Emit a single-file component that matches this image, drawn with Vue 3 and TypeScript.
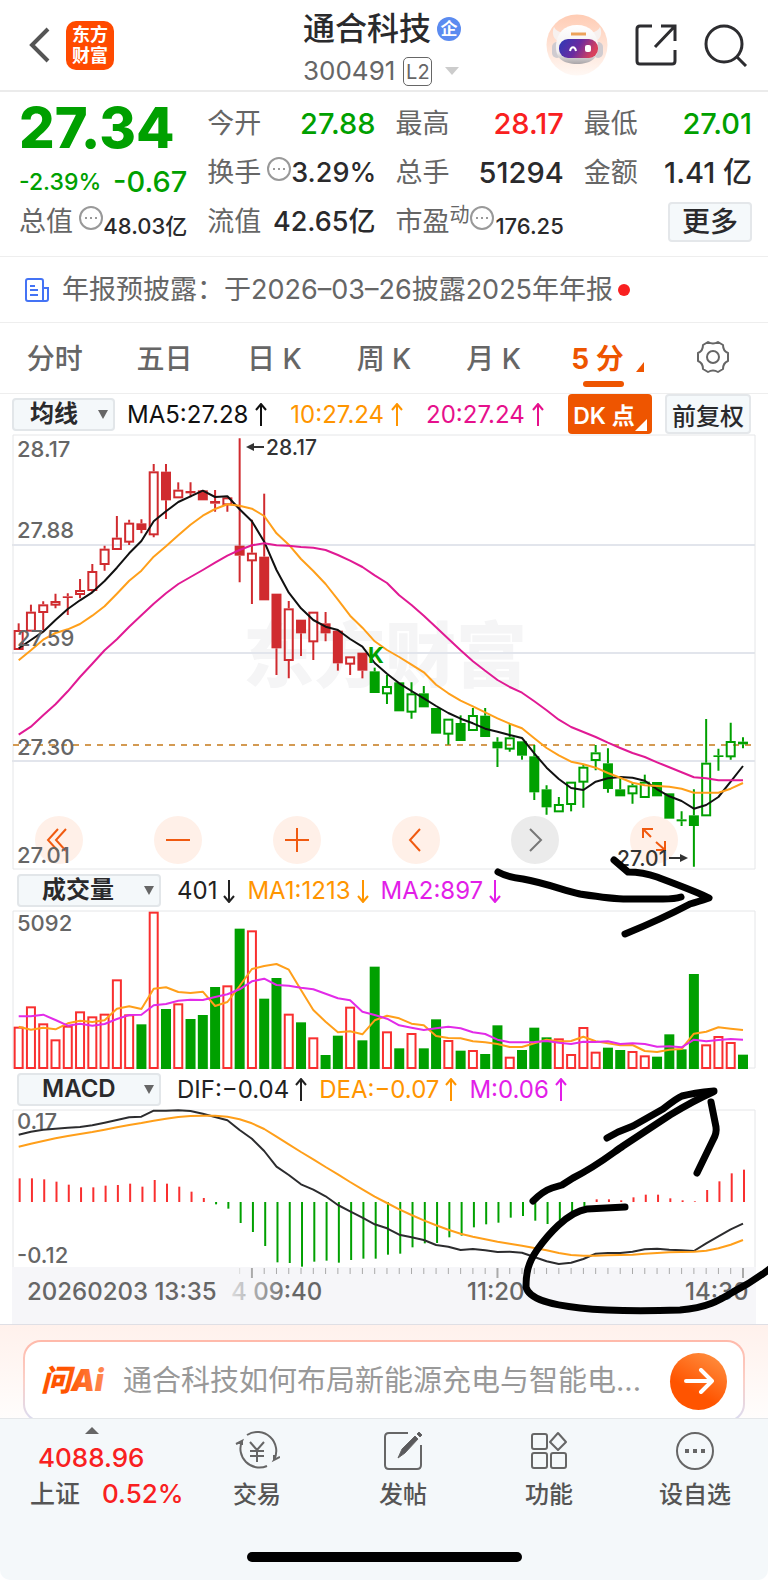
<script setup lang="ts">
import { ref } from 'vue'

type Candle = [high: number, top: number, bottom: number, low: number, hollow: 0 | 1]
interface Readout { text: string; color: string; dir: 'up' | 'down' }

const tabs = ['分时', '五日', '日 K', '周 K', '月 K', '5 分']
const activeTab = ref('5 分')
const overlay = ref('均线')
const volumeKind = ref('成交量')
const indicator = ref('MACD')
const question = ref('')

// Series are stored in thirds of a pixel, top-down.
const COUNT = 60
const u = (v: number) => v / 3
const cx = (i: number) => u(56 + i * 36.83)
const line = (ys: number[]) => ys.map((y, i) => `${cx(i).toFixed(1)},${u(y).toFixed(1)}`).join(' ')

const candles: Candle[] = [
  [580, 600, 657, 657, 1], [524, 545, 602, 602, 1], [514, 523, 546, 600, 1], [491, 513, 524, 535, 1],
  [490, 499, 504, 555, 0], [447, 480, 492, 505, 1], [402, 423, 480, 487, 1], [347, 356, 402, 422, 1],
  [258, 323, 357, 357, 1], [269, 278, 335, 345, 1], [268, 280, 300, 310, 0], [102, 124, 313, 322, 1],
  [102, 125, 211, 267, 0], [157, 179, 202, 202, 1], [157, 183, 190, 202, 0], [181, 181, 211, 211, 0],
  [180, 213, 221, 245, 0], [200, 202, 223, 245, 1], [25, 347, 377, 457, 0], [269, 368, 391, 522, 1],
  [191, 380, 511, 511, 0], [491, 491, 655, 735, 0], [513, 535, 690, 745, 1], [569, 569, 610, 678, 0],
  [545, 545, 634, 690, 1], [546, 580, 610, 634, 0], [602, 602, 700, 722, 0], [679, 679, 701, 735, 1],
  [668, 668, 722, 745, 0], [713, 724, 789, 789, 0], [735, 768, 790, 822, 1], [757, 757, 844, 844, 0],
  [757, 790, 845, 866, 1], [768, 790, 832, 832, 0], [834, 834, 911, 911, 0], [866, 866, 911, 944, 1],
  [856, 879, 933, 933, 0], [834, 855, 900, 900, 1], [834, 857, 921, 921, 0], [922, 935, 955, 1011, 0],
  [880, 922, 956, 965, 1], [934, 934, 977, 989, 0], [945, 979, 1087, 1110, 0], [1066, 1078, 1132, 1154, 0],
  [1101, 1122, 1144, 1144, 1], [1055, 1055, 1122, 1144, 1], [1003, 1010, 1055, 1133, 1], [945, 967, 990, 1021, 1],
  [955, 1000, 1077, 1088, 0], [1045, 1078, 1099, 1099, 0], [1056, 1066, 1090, 1121, 1], [1034, 1055, 1101, 1101, 1],
  [1056, 1056, 1099, 1099, 0], [1090, 1090, 1166, 1166, 0], [1144, 1168, 1174, 1188, 0], [1078, 1156, 1188, 1310, 0],
  [867, 998, 1156, 1156, 1], [956, 976, 981, 1022, 0], [878, 933, 979, 989, 1], [922, 935, 943, 955, 0],
]
const candleColor = (i: number) => (i < 29 ? '#d02b2f' : '#00a000')

const ma5 = [655, 630, 605, 570, 537, 511, 487, 453, 413, 370, 333, 274, 244, 216, 199, 182, 201, 199, 238, 274, 335, 420, 488, 535, 570, 590, 600, 627, 650, 699, 731, 760, 783, 805, 828, 849, 866, 880, 896, 905, 915, 924, 970, 1013, 1047, 1074, 1080, 1055, 1045, 1041, 1043, 1052, 1078, 1099, 1113, 1136, 1125, 1101, 1055, 1008]
const ma10 = [691, 661, 629, 609, 598, 582, 557, 529, 491, 452, 422, 380, 349, 316, 284, 257, 237, 223, 227, 236, 258, 310, 344, 387, 423, 462, 509, 557, 593, 634, 660, 681, 704, 727, 764, 790, 812, 829, 847, 865, 881, 895, 925, 954, 976, 995, 1003, 1013, 1029, 1043, 1058, 1066, 1068, 1070, 1076, 1088, 1088, 1088, 1076, 1059]
const ma20 = [914, 890, 856, 823, 784, 741, 701, 661, 628, 590, 556, 521, 490, 462, 441, 420, 398, 377, 360, 346, 340, 346, 347, 351, 353, 360, 375, 392, 411, 436, 459, 496, 525, 557, 592, 626, 661, 694, 722, 750, 771, 788, 814, 841, 869, 891, 906, 921, 938, 954, 969, 981, 997, 1012, 1027, 1042, 1045, 1051, 1051, 1051]

const VOL_BASE = 627
const volumes = [500, 439, 490, 538, 497, 454, 469, 461, 358, 463, 493, 155, 447, 430, 477, 465, 381, 376, 206, 211, 416, 354, 461, 487, 532, 585, 527, 440, 541, 320, 514, 565, 519, 565, 478, 540, 572, 570, 582, 496, 590, 570, 503, 532, 535, 582, 501, 575, 563, 570, 573, 586, 590, 523, 568, 342, 553, 528, 546, 584]
const rising = new Set([0, 1, 2, 3, 4, 5, 6, 7, 8, 9, 11, 13, 17, 19, 22, 24, 27, 30, 32, 35, 37, 40, 44, 45, 46, 47, 50, 51, 56, 57, 58])
const vma1 = [500, 509, 503, 508, 490, 482, 486, 481, 446, 439, 447, 386, 382, 396, 399, 395, 438, 426, 378, 327, 318, 312, 329, 390, 450, 485, 517, 514, 523, 481, 467, 475, 491, 496, 528, 534, 535, 544, 547, 552, 561, 561, 550, 539, 544, 543, 530, 544, 550, 556, 555, 573, 576, 569, 567, 521, 515, 502, 506, 510]
const vma2 = [469, 469, 464, 480, 497, 491, 497, 492, 477, 465, 464, 436, 432, 422, 419, 420, 411, 403, 388, 364, 356, 375, 377, 383, 388, 401, 415, 421, 455, 465, 476, 496, 503, 510, 505, 500, 505, 517, 522, 539, 547, 547, 546, 543, 548, 552, 545, 546, 544, 552, 550, 552, 560, 559, 562, 539, 544, 540, 537, 539]

const ZERO = 396
const hist = [325, 325, 328, 335, 344, 352, 352, 347, 345, 341, 350, 330, 341, 350, 365, 384, 403, 416, 459, 486, 528, 577, 579, 590, 575, 572, 578, 570, 566, 566, 554, 551, 532, 520, 519, 502, 497, 472, 463, 458, 443, 438, 452, 462, 450, 425, 410, 388, 388, 391, 382, 374, 374, 385, 391, 394, 360, 334, 310, 299]
const dif = [194, 185, 179, 176, 173, 171, 166, 158, 150, 142, 140, 122, 122, 121, 123, 131, 141, 151, 180, 206, 243, 290, 315, 343, 359, 379, 405, 424, 443, 463, 475, 494, 502, 510, 525, 530, 540, 537, 541, 546, 545, 548, 561, 574, 582, 578, 567, 551, 549, 549, 545, 538, 536, 539, 541, 543, 520, 499, 478, 461]
const dea = [230, 221, 213, 205, 198, 192, 186, 179, 172, 165, 159, 152, 146, 141, 138, 137, 137, 140, 148, 160, 177, 200, 223, 246, 268, 291, 313, 336, 358, 380, 399, 418, 435, 451, 466, 479, 491, 500, 508, 515, 521, 527, 534, 541, 549, 555, 557, 557, 556, 555, 554, 551, 549, 547, 546, 545, 542, 535, 524, 510]
const ticks = Array.from({ length: COUNT - 18 }, (_, k) => k + 18)

const priceLabels = [{ t: '28.17', y: 27 }, { t: '27.88', y: 108 }, { t: '27.59', y: 216 }, { t: '27.30', y: 325 }, { t: '27.01', y: 433 }]

const maReadouts: Readout[] = [
  { text: 'MA5:27.28', color: '#111', dir: 'up' },
  { text: '10:27.24', color: '#ff9500', dir: 'up' },
  { text: '20:27.24', color: '#e6108c', dir: 'up' },
]
const volReadouts: Readout[] = [
  { text: '401', color: '#222', dir: 'down' },
  { text: 'MA1:1213', color: '#ff9500', dir: 'down' },
  { text: 'MA2:897', color: '#e21ee8', dir: 'down' },
]
const macdReadouts: Readout[] = [
  { text: 'DIF:−0.04', color: '#222', dir: 'up' },
  { text: 'DEA:−0.07', color: '#ff9500', dir: 'up' },
  { text: 'M:0.06', color: '#e21ee8', dir: 'up' },
]
const arrow = { up: 'M6 23V1M1 7l5-6 5 6', down: 'M6 1v22M1 17l5 6 5-6' }

const controls = [
  { label: '最早', d: 'M23 13l-10 11 10 11M31 13l-10 11 10 11', muted: false },
  { label: '缩小', d: 'M12 24h24', muted: false },
  { label: '放大', d: 'M12 24h24M24 12v24', muted: false },
  { label: '向左', d: 'M28 13L18 24l10 11', muted: false },
  { label: '向右', d: 'M19 13l11 11-11 11', muted: true },
  { label: '全屏', d: 'M13 22V13h10M13 13l8 8M35 25v9h-9M35 34l-9-8', muted: false },
]
</script>

<template>
  <div class="page">
    <header class="top">
      <div class="top-left">
        <button class="plain" aria-label="返回">
          <svg width="22" height="36" viewBox="0 0 22 36"><path d="M20 2L4 18l16 16" fill="none" stroke="#555" stroke-width="4" /></svg>
        </button>
        <a class="brand" href="#"><span>东方</span><span>财富</span></a>
      </div>
      <div class="name">
        <h1>通合科技<i class="badge">企</i></h1>
        <p>300491<span class="level">L2</span><i class="caret"></i></p>
      </div>
      <div class="top-right">
        <button class="plain" aria-label="智能助手">
          <svg width="62" height="62" viewBox="0 0 62 62">
            <defs>
              <linearGradient id="halo" x1="0" y1="0" x2="0" y2="1"><stop offset="0" stop-color="#ffccb4" /><stop offset="1" stop-color="#fff8f4" /></linearGradient>
              <linearGradient id="visor" x1="0" y1="0" x2="1" y2="0.3"><stop offset="0" stop-color="#2b3ab8" /><stop offset="0.55" stop-color="#6a2ba0" /><stop offset="1" stop-color="#d8405c" /></linearGradient>
              <linearGradient id="shell" x1="0" y1="0" x2="0" y2="1"><stop offset="0" stop-color="#fff" /><stop offset="0.7" stop-color="#f1eeee" /><stop offset="1" stop-color="#aaa5a8" /></linearGradient>
            </defs>
            <circle cx="31" cy="31" r="30.500" fill="url(#halo)" />
            <path d="M8 13c-3 7 0 13 6 15l5-10c-5 1-9-1-11-5zM54 13c3 7 0 13-6 15l-5-10c5 1 9-1 11-5z" fill="#f7f1ef" />
            <rect x="6" y="28" width="10" height="16" rx="5" fill="#cfcbd0" />
            <rect x="47" y="28" width="10" height="16" rx="5" fill="#cfcbd0" />
            <path d="M31 11c13 0 20 8 21 20 1 13-7 19-21 19S9 44 10 31c1-12 8-20 21-20z" fill="url(#shell)" />
            <rect x="13" y="25" width="39" height="19" rx="9" fill="url(#visor)" />
            <path d="M24 37c1-5 5-5 6 0" fill="none" stroke="#fff" stroke-width="2" />
            <rect x="39" y="31" width="6" height="7" rx="2" fill="#fff" />
            <path d="M25 20h15" stroke="#eda35c" stroke-width="3" />
          </svg>
        </button>
        <button class="plain" aria-label="分享">
          <svg width="42" height="42" viewBox="0 0 42 42" fill="none" stroke="#2d2d30" stroke-width="3">
            <path d="M17 2H5Q2 2 2 5v32q0 3 3 3h32q3 0 3-3V26M26 2h14v15M40 2L20 23" />
          </svg>
        </button>
        <button class="plain" aria-label="搜索">
          <svg width="44" height="44" viewBox="0 0 44 44" fill="none" stroke="#2d2d30" stroke-width="3">
            <circle cx="20" cy="21" r="18" /><path d="M33 34l9 9" />
          </svg>
        </button>
      </div>
    </header>

    <section class="quote">
      <strong class="price">27.34</strong>
      <div class="cell"><span>今开</span><b class="green">27.88</b></div>
      <div class="cell"><span>最高</span><b class="red">28.17</b></div>
      <div class="cell"><span>最低</span><b class="green">27.01</b></div>

      <div class="cell change green"><b class="pct">-2.39%</b><b>-0.67</b></div>
      <div class="cell"><span>换手<svg class="info" viewBox="0 0 24 24"><circle cx="12" cy="12" r="11" /><path d="M6 12h2M11 12h2M16 12h2" /></svg></span><b class="medium">3.29%</b></div>
      <div class="cell"><span>总手</span><b>51294</b></div>
      <div class="cell"><span>金额</span><b>1.41 亿</b></div>

      <div class="cell"><span>总值<svg class="info" viewBox="0 0 24 24"><circle cx="12" cy="12" r="11" /><path d="M6 12h2M11 12h2M16 12h2" /></svg></span><b class="small">48.03亿</b></div>
      <div class="cell"><span>流值</span><b class="medium">42.65亿</b></div>
      <div class="cell"><span>市盈<sup>动</sup><svg class="info" viewBox="0 0 24 24"><circle cx="12" cy="12" r="11" /><path d="M6 12h2M11 12h2M16 12h2" /></svg></span><b class="small">176.25</b></div>
      <div class="cell more-cell"><button class="more">更多</button></div>
    </section>

    <a class="news" href="#">
      <svg width="24" height="24" viewBox="0 0 24 24" fill="none" stroke="#4473f5" stroke-width="2">
        <path d="M18 23H3q-2 0-2-2V3q0-2 2-2h13q2 0 2 2v20h3q2 0 2-2V10h-5M5 8h5M5 12h8M5 17h8" />
      </svg>
      <span>年报预披露：于2026–03–26披露2025年年报</span>
      <i class="dot"></i>
    </a>

    <nav class="tabs">
      <button v-for="t in tabs" :key="t" :class="{ on: t === activeTab }" @click="activeTab = t">
        {{ t }}<svg v-if="t === activeTab" class="corner" width="8" height="10" viewBox="0 0 8 10"><path d="M8 0v10H0z" fill="#ee5500" /></svg>
      </button>
      <button aria-label="设置">
        <svg width="34" height="34" viewBox="0 0 34 34" fill="none" stroke="#666" stroke-width="2">
          <path d="M12 2q5 3 10 0l5 3q0 6 5 8v8q-5 2-5 8l-5 3q-5-3-10 0l-5-3q0-6-5-8v-8q5-2 5-8z" stroke-linejoin="round" /><circle cx="17" cy="17" r="6" />
        </svg>
      </button>
    </nav>

    <div class="toolbar ma-bar">
      <label class="picker narrow"><select v-model="overlay" aria-label="主图指标"><option>均线</option></select></label>
      <div class="readouts">
        <span v-for="r in maReadouts" :key="r.text" :style="{ color: r.color }">{{ r.text }}<svg width="12" height="24" viewBox="0 0 12 24"><path :d="arrow[r.dir]" /></svg></span>
      </div>
      <button class="dk">DK 点<svg width="12" height="12" viewBox="0 0 12 12"><path d="M12 0v12H0z" fill="#fff" /></svg></button>
      <button class="adjust">前复权</button>
    </div>

    <section class="charts">
      <div class="price-wrap">
        <svg class="chart price-chart" viewBox="0 4 768 436">
          <text class="watermark" x="243" y="251">东方财富</text>
          <path d="M12 115H755M12 223H755M12 331H755" stroke="#e2e5ec" stroke-width="2" />
          <path d="M13 5H755V439H13z" fill="none" stroke="#e5e6e8" stroke-width="1" />
          <path d="M13 315H755" stroke="#d39a52" stroke-width="2" stroke-dasharray="6 6" />
          <g v-for="(c, i) in candles" :key="i" :stroke="candleColor(i)" stroke-width="2">
            <path :d="`M${cx(i)} ${u(c[0])}V${u(c[1])}M${cx(i)} ${u(c[2])}V${u(c[3])}`" />
            <rect v-if="c[4]" :x="cx(i) - 4" :y="u(c[1]) + 1" width="8" :height="Math.max(u(c[2] - c[1]) - 1, 1)" fill="none" />
            <rect v-else :x="cx(i) - 5" :y="u(c[1])" width="10" :height="u(c[2] - c[1])" :fill="candleColor(i)" stroke="none" />
          </g>
          <polyline :points="line(ma5)" stroke="#111" class="curve" />
          <polyline :points="line(ma10)" stroke="#ff9f1a" class="curve" />
          <polyline :points="line(ma20)" stroke="#e01a94" class="curve" />
          <text class="mark-k" x="368" y="233">K</text>
          <text v-for="l in priceLabels" :key="l.t" class="axis" x="17" :y="l.y">{{ l.t }}</text>
          <path d="M250 17h14M669 428h14" stroke="#333" stroke-width="2" />
          <path d="M246 17l8-4v8zM688 428l-8-4v8z" fill="#333" />
          <text class="extreme" x="266" y="25">28.17</text>
          <text class="extreme" x="617" y="436">27.01</text>
        </svg>
        <div class="controls">
          <button v-for="c in controls" :key="c.label" :aria-label="c.label" :class="{ muted: c.muted }">
            <svg viewBox="0 0 48 48"><path :d="c.d" /></svg>
          </button>
        </div>
      </div>

      <div class="toolbar">
        <label class="picker"><select v-model="volumeKind" aria-label="成交量指标"><option>成交量</option></select></label>
        <div class="readouts tight">
          <span v-for="r in volReadouts" :key="r.text" :style="{ color: r.color }">{{ r.text }}<svg width="12" height="24" viewBox="0 0 12 24"><path :d="arrow[r.dir]" /></svg></span>
        </div>
      </div>
      <svg class="chart" viewBox="0 50 768 159">
        <path d="M13 51H755V208H13z" fill="none" stroke="#e5e6e8" stroke-width="1" />
        <template v-for="(v, i) in volumes" :key="i">
          <rect v-if="rising.has(i)" :x="cx(i) - 4" :y="u(v) + 1" width="8" :height="u(VOL_BASE - v) - 2" fill="none" stroke="#f92f2f" stroke-width="2" />
          <rect v-else :x="cx(i) - 5" :y="u(v)" width="10" :height="u(VOL_BASE - v)" fill="#00a000" />
        </template>
        <polyline :points="line(vma1)" stroke="#ff9f1a" class="curve" />
        <polyline :points="line(vma2)" stroke="#e22be8" class="curve" />
        <text class="axis" x="17" y="71">5092</text>
      </svg>

      <div class="toolbar">
        <label class="picker"><select v-model="indicator" aria-label="副图指标"><option>MACD</option></select></label>
        <div class="readouts tight">
          <span v-for="r in macdReadouts" :key="r.text" :style="{ color: r.color }">{{ r.text }}<svg width="12" height="24" viewBox="0 0 12 24"><path :d="arrow[r.dir]" /></svg></span>
        </div>
      </div>
      <svg class="chart" viewBox="0 39 768 215">
        <defs>
          <linearGradient id="fade" gradientUnits="userSpaceOnUse" x1="225" y1="0" x2="290" y2="0"><stop offset="0" stop-color="#e8e8ea" /><stop offset="1" stop-color="#666" /></linearGradient>
        </defs>
        <path d="M13 197V40H755V197" fill="none" stroke="#e5e6e8" stroke-width="1" />
        <rect x="12" y="197" width="744" height="57" fill="#f6f6f9" />
        <path v-for="(h, i) in hist" :key="i" :d="`M${cx(i) + 1} ${u(ZERO)}V${u(h)}`" :stroke="h < ZERO ? '#f92f2f' : '#00a000'" stroke-width="2" />
        <text class="axis" x="17" y="59">0.17</text>
        <text class="axis" x="17" y="193">-0.12</text>
        <polyline :points="line(dif)" stroke="#2c2c2e" class="curve" />
        <polyline :points="line(dea)" stroke="#ff9f1a" class="curve" />
        <path v-for="i in ticks" :key="i" :d="`M${cx(i)} 198v${i % 20 === 19 ? 10 : 6}`" :stroke="i === 18 ? '#ddd' : '#aaa'" :stroke-width="i % 20 === 19 ? 2 : 1" />
        <text class="time" x="27" y="230">20260203 13:35</text>
        <text class="time" x="231" y="230" fill="url(#fade)">4 09:40</text>
        <text class="time" x="467" y="230">11:20</text>
        <text class="time" x="685" y="230">14:30</text>
      </svg>

      <svg class="ink" viewBox="0 434 768 890" fill="none" stroke="#000" stroke-width="7" stroke-linecap="round" stroke-linejoin="round">
        <path d="M498 872Q507 877 523 879C545 883 563 890 580 894C600 897 613 899 627 899H663Q675 899 681 897" />
        <path d="M614 860L628 872Q643 872 657 877C673 883 700 893 709 898Q697 902 690 904C673 913 647 925 625 934" />
        <path d="M533 1201Q543 1191 552 1188L562 1185L573 1178C597 1166 610 1155 623 1146L670 1115Q693 1101 713 1092" />
        <path d="M607 1138L618 1132L633 1126L663 1109Q677 1098 682 1096Q693 1093 714 1091" />
        <path d="M711 1102L716 1127Q717 1133 713 1140L697 1173" />
        <path d="M625 1207L587 1209C567 1212 547 1236 537 1250C528 1263 526 1273 526 1287C529 1300 553 1305 580 1308C607 1311 647 1311 680 1310C707 1308 720 1300 733 1292Q753 1282 772 1267" />
      </svg>
    </section>

    <section class="ask">
      <div class="ask-card">
        <svg width="70" height="36" viewBox="0 0 70 36" role="img" aria-label="问Ai">
          <defs><linearGradient id="askfill" x1="0" y1="0" x2="1" y2="0"><stop offset="0.4" stop-color="#ff5400" /><stop offset="1" stop-color="#ff8a55" /></linearGradient></defs>
          <text class="ask-logo" x="0" y="28" fill="url(#askfill)">问Ai</text>
        </svg>
        <input v-model="question" aria-label="提问" placeholder="通合科技如何布局新能源充电与智能电..." />
        <button class="send" aria-label="发送">
          <svg width="30" height="26" viewBox="0 0 30 26" fill="none" stroke="#fff" stroke-width="4" stroke-linecap="round" stroke-linejoin="round"><path d="M2 13h26M17 2l11 11-11 11" /></svg>
        </button>
      </div>
    </section>

    <footer class="bottom">
      <nav>
        <a class="index" href="#">
          <i class="tri"></i>
          <b>4088.96</b>
          <span>上证<b>0.52%</b></span>
        </a>
        <a href="#">
          <svg width="46" height="42" viewBox="0 0 46 42"><path d="M13 5A19 19 0 0 1 40 30l6-3M33 36A19 19 0 0 1 8 11L2 14M40 30v-5M8 11v4M16 12l7 8 7-8M23 20v12M16 21h14M16 26h14" /></svg>
          <span>交易</span>
        </a>
        <a href="#">
          <svg width="42" height="42" viewBox="0 0 42 42"><path d="M26 3H7Q3 3 3 7v28q0 4 4 4h28q4 0 4-4V15" /><path d="M16 28l4-9L33 6l3 3-13 14zM35 4l2-2 3 3-2 2z" fill="#5a5a5c" stroke-width="1" /></svg>
          <span>发帖</span>
        </a>
        <a href="#">
          <svg width="42" height="42" viewBox="0 0 42 42"><rect x="4" y="4" width="15" height="15" rx="2" /><rect x="4" y="23" width="15" height="15" rx="2" /><rect x="23" y="23" width="15" height="15" rx="2" /><path d="M30 3l8 9-8 8-8-8z" stroke-linejoin="round" /></svg>
          <span>功能</span>
        </a>
        <a href="#">
          <svg width="42" height="42" viewBox="0 0 42 42"><circle cx="21" cy="21" r="18" /><path d="M11 21h4M19 21h4M27 21h4" stroke-width="4" /></svg>
          <span>设自选</span>
        </a>
      </nav>
      <div class="home"></div>
    </footer>
  </div>
</template>

<style>
body { margin: 0; background: #fff; }
</style>

<style scoped>
* { box-sizing: border-box; }
.page { font-family: Inter, "Noto Sans CJK SC", sans-serif; color: #2a2a2c; background: #fff; overflow: hidden; }
button, select, input { font: inherit; color: inherit; }
button { cursor: pointer; padding: 0; }
a { color: inherit; text-decoration: none; }
i { font-style: normal; }
svg { display: block; flex: none; }
.plain { border: 0; background: none; }
.green { color: #00a000; }
.red { color: #f92020; }

.top { display: grid; grid-template-columns: 1fr auto 1fr; height: 92px; border-bottom: 2px solid #ebebeb; padding: 0 20px 0 28px; }
.top-left { display: flex; align-items: center; gap: 16px; }
.brand { width: 48px; height: 49px; border-radius: 10px; background: #ff4a00; color: #fff; display: flex; flex-direction: column; align-items: center; justify-content: center; font-size: 18px; line-height: 21px; font-weight: 700; }
.name { padding-top: 9px; margin-right: 12px; }
.name h1 { margin: 0; font-size: 32px; line-height: 40px; font-weight: 500; display: flex; align-items: center; }
.badge { width: 24px; height: 24px; margin-left: 6px; border-radius: 50%; background: #5b8bf0; color: #fff; font-size: 17px; line-height: 24px; text-align: center; font-weight: 700; }
.name p { margin: 4px 0 0; font-size: 26px; line-height: 36px; color: #666; display: flex; align-items: center; }
.level { margin-left: 8px; width: 29px; height: 29px; border: 1px solid #666; border-radius: 5px; font-size: 20px; line-height: 28px; text-align: center; }
.caret { margin-left: 13px; border: 7px solid transparent; border-top: 8px solid #ccc; border-bottom: 0; }
.top-right { display: flex; align-items: center; justify-content: flex-end; gap: 27px; }

.quote { display: grid; grid-template-columns: repeat(4, minmax(0, 1fr)); column-gap: 20px; grid-auto-rows: 49px; padding: 7px 16px 10px 19px; border-bottom: 1px solid #eee; align-items: center; }
.price { font-size: 56px; line-height: 56px; font-weight: 800; color: #00a000; padding-top: 8px; }
.cell { display: flex; align-items: center; justify-content: space-between; white-space: nowrap; font-size: 27px; line-height: 36px; }
.cell > span { display: flex; align-items: center; color: #666; }
.cell b { font-size: 29px; font-weight: 500; }
.cell .medium { font-size: 27px; }
.cell .small { font-size: 22px; padding-top: 8px; }
.change { padding-top: 18px; }
.cell .pct { font-size: 23px; }
.info { width: 24px; height: 24px; margin: 0 0 8px 6px; fill: none; stroke: #999; stroke-width: 2; }
sup { font-size: 20px; line-height: 20px; margin-bottom: 14px; }
sup + .info { margin-left: 0; }
.cell.more-cell { justify-content: flex-end; }
.more { width: 84px; height: 40px; border: 2px solid #e4e7ea; border-radius: 4px; background: #f5f9fb; font-size: 28px; font-weight: 500; line-height: 32px; }

.news { display: flex; align-items: center; height: 66px; padding-left: 25px; border-bottom: 1px solid #eee; font-size: 27px; line-height: 36px; color: #666; white-space: nowrap; }
.news span { margin: 0 5px 0 13px; }
.dot { width: 12px; height: 12px; border-radius: 50%; background: #f92020; }

.tabs { display: grid; grid-template-columns: repeat(7, 1fr); height: 71px; border-bottom: 1px solid #eee; }
.tabs button { position: relative; display: flex; align-items: center; justify-content: center; padding-bottom: 2px; border: 0; background: none; color: #666; font-size: 28px; font-weight: 500; }
.tabs .on { color: #ee5500; font-weight: 700; padding-right: 12px; }
.tabs .on::after { content: ""; position: absolute; bottom: 6px; left: 50%; margin-left: -20px; width: 41px; height: 6px; border-radius: 3px; background: #ee5500; }
.corner { margin: 20px -20px 0 12px; }

.toolbar { display: flex; align-items: center; height: 40px; padding: 0 17px; }
.ma-bar { padding-left: 12px; }
.picker { position: relative; width: 144px; flex: none; }
.picker select { appearance: none; display: block; width: 100%; height: 33px; padding: 0 23px; border: 2px solid #e2e6e9; border-radius: 4px; background: #f4f8fa; font-size: 24px; font-weight: 600; line-height: 28px; }
.picker::after { content: ""; position: absolute; right: 7px; top: 12px; border: 5px solid transparent; border-top: 9px solid #666; border-bottom: 0; }
.picker.narrow { width: 103px; }
.picker.narrow select { padding: 0 16px; }
.readouts { display: flex; gap: 23px; margin-left: 12px; padding-top: 2px; flex: 1; font-size: 24px; line-height: 32px; white-space: nowrap; }
.readouts.tight { gap: 12px; margin-left: 16px; }
.readouts span { display: flex; align-items: center; gap: 7px; }
.readouts.tight span { gap: 6px; }
.readouts path { fill: none; stroke: currentColor; stroke-width: 2; }
.dk { position: relative; width: 84px; height: 40px; padding-right: 12px; border: 0; border-radius: 4px; background: #ee5500; color: #fff; font-size: 23px; font-weight: 600; white-space: nowrap; }
.dk svg { position: absolute; right: 5px; bottom: 3px; }
.adjust { width: 86px; height: 40px; margin-left: 13px; border: 2px solid #e4e7ea; border-radius: 4px; background: #f5f9fb; font-size: 24px; font-weight: 500; white-space: nowrap; }

.charts, .price-wrap { position: relative; }
.chart { width: 100%; height: auto; }
.price-chart { position: relative; z-index: 1; pointer-events: none; }
.curve { fill: none; stroke-width: 2; stroke-linejoin: round; }
.axis { font-size: 22px; font-weight: 500; fill: #666; }
.time { font-size: 24px; font-weight: 500; }
.time:not([fill]) { fill: #666; }
.extreme { font-size: 21px; font-weight: 500; fill: #333; }
.mark-k { font-size: 22px; font-weight: 700; fill: #00a000; }
.watermark { font-size: 71px; font-weight: 900; fill: #f5f5f6; }
.controls { position: absolute; left: 4.5%; right: 11.7%; bottom: 6px; display: flex; justify-content: space-between; }
.controls button { width: 48px; height: 48px; border: 0; border-radius: 50%; background: #fff0e8; }
.controls .muted { background: #ebebeb; }
.controls path { fill: none; stroke: #f05a10; stroke-width: 2; }
.controls .muted path { stroke: #777; }
.ink { position: absolute; inset: 0; z-index: 2; width: 100%; height: 100%; pointer-events: none; }

.ask { height: 94px; padding: 15px 23px 0; overflow: hidden; border-top: 1px solid #dfdfe5; background: linear-gradient(#fff1ec, #fffdfc); }
.ask-card { display: flex; align-items: center; height: 82px; padding: 0 16px; border: 2px solid transparent; border-radius: 18px; background: linear-gradient(#fff, #fff) padding-box, linear-gradient(#ffb9aa, #fbd0c8 50%, #d9dcf2) border-box; }
.ask-logo { font-size: 30px; font-weight: 900; font-style: italic; }
.ask input { flex: 1; min-width: 0; margin: 0 8px 0 12px; padding: 0; border: 0; outline: 0; background: none; font-size: 29px; line-height: 40px; }
.ask input::placeholder { color: #999; opacity: 1; }
.send { display: flex; align-items: center; justify-content: center; width: 57px; height: 57px; border: 0; border-radius: 50%; background: linear-gradient(210deg, #ff9648, #ff5400 65%); }

.bottom { height: 162px; display: flex; flex-direction: column; align-items: center; justify-content: space-between; padding-bottom: 18px; border-top: 1px solid #e4e7ea; background: #f4f8fa; border-radius: 0 0 10px 10px; }
.bottom nav { display: grid; grid-template-columns: 184fr 146fr 146fr 146fr 146fr; width: 100%; }
.bottom a { display: flex; flex-direction: column; align-items: center; padding-top: 11px; font-size: 24px; line-height: 34px; color: #555; font-weight: 500; white-space: nowrap; }
.bottom a > svg { margin-bottom: 6px; fill: none; stroke: #666; stroke-width: 2; }
.bottom .index { padding-top: 8px; padding-left: 30px; align-items: flex-start; font-size: 25px; line-height: 36px; }
.index b { color: #f92020; font-size: 26px; font-weight: 500; }
.index > b { padding-left: 8px; margin-top: 6px; }
.index span b { margin-left: 22px; }
.tri { margin-left: 55px; border: 7px solid transparent; border-bottom: 7px solid #666; border-top: 0; }
.home { width: 275px; height: 10px; border-radius: 5px; background: #000; }
</style>
